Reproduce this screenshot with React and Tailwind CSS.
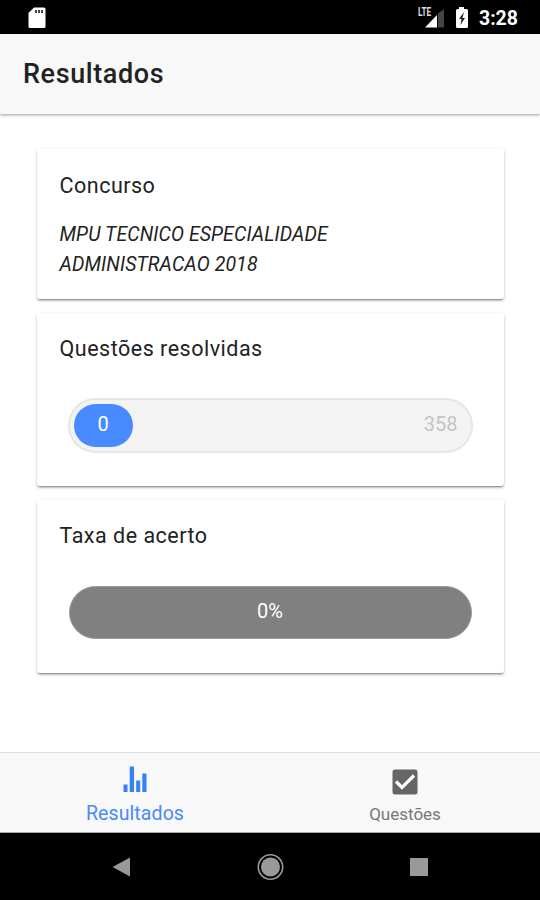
import React, { useState } from "react";

const StatusBar = () => (
  <div className="h-[34px] shrink-0 bg-black flex items-center justify-between pl-[27px] pr-[22px]">
    <svg className="mt-[2px]" width="19" height="22" viewBox="0 0 19 22">
      <path d="M7 0.500h10a1.500 1.500 0 0 1 1.500 1.500v17.500a1.500 1.500 0 0 1-1.500 1.500H3a1.500 1.500 0 0 1-1.500-1.500V6z" fill="#fff" />
      <path d="M8 3h2v3H8zM11 3h2v3h-2zM14 3h2v3h-2z" fill="#444" />
    </svg>
    <div className="flex items-center">
      <div className="relative w-7 h-6">
        <svg width="28" height="24" viewBox="0 0 28 24">
          <path d="M20 8.500l6-4.500v18.500h-6z" fill="#444" />
          <path d="M19 10v12.500H7z" fill="#fff" />
        </svg>
        <span className="absolute left-0 top-[1px] text-[12px] leading-[12px] font-bold text-[#ddd] origin-left scale-x-[0.68]">
          LTE
        </span>
      </div>
      <svg className="ml-[9px] mt-[2px]" width="14" height="22" viewBox="0 0 14 22">
        <path d="M4 0h5v2h2.500a1.500 1.500 0 0 1 1.500 1.500v16a1.500 1.500 0 0 1-1.500 1.500h-9A1.500 1.500 0 0 1 1 19.500v-16A1.500 1.500 0 0 1 2.500 2H4z" fill="#fff" />
        <path d="M9 5l-5 7h2.500l-1 6L10 11H7.500z" fill="#222" />
      </svg>
      <span className="ml-[10px] mt-[3px] text-[19.500px] leading-6 font-bold text-white">3:28</span>
    </div>
  </div>
);

const Card = ({ title, className, children }) => (
  <section
    className={`w-[467px] rounded-[3px] bg-white px-[23px] shadow-[0_2px_2px_0_rgba(0,0,0,0.2),0_3px_1px_-2px_rgba(0,0,0,0.22),0_1px_4px_0_rgba(0,0,0,0.12)] ${className}`}
  >
    <h2 className="text-[21.500px] leading-7 tracking-[0.5px] text-[#222]">{title}</h2>
    {children}
  </section>
);

const StatsIcon = () => (
  <svg width="24" height="26" viewBox="0 0 24 26" fill="#3880f8">
    <path d="M0.500 18.500h4V26h-4zM6.700 0.500h4.300v25.500H6.700zM13.200 14.500h4V26h-4zM19.300 7.500h4.200V26h-4.200z" />
  </svg>
);

const CheckIcon = () => (
  <svg width="26" height="26" viewBox="0 0 26 26">
    <rect x="0.500" y="0.500" width="25" height="25" rx="2.500" fill="#666" />
    <path d="M4 12.500l6 6L22 6.500" fill="none" stroke="#fff" strokeWidth="3.200" />
  </svg>
);

const NavigationBar = () => (
  <div className="h-[67px] shrink-0 bg-black flex items-center justify-between px-[112px]">
    <svg width="19" height="20" viewBox="0 0 19 20">
      <path d="M0.500 10L18 0.500v19z" fill="#999" />
    </svg>
    <svg width="28" height="28" viewBox="0 0 28 28">
      <circle cx="13.500" cy="14" r="12.200" fill="none" stroke="#999" strokeWidth="1.600" />
      <circle cx="13.500" cy="14" r="9.500" fill="#999" />
    </svg>
    <div className="w-[18px] h-[18px] bg-[#999]" />
  </div>
);

const App = () => {
  const [activeTab, setActiveTab] = useState("resultados");

  return (
    <div className="w-[540px] h-[900px] flex flex-col overflow-hidden bg-white font-['Roboto',sans-serif]">
      <StatusBar />
      <header className="relative h-20 shrink-0 bg-[#f8f8f8] flex items-center pl-[23px] shadow-[0_1px_3px_rgba(0,0,0,0.4)]">
        <h1 className="text-[27px] leading-8 font-medium tracking-[0.6px] text-[#222]">Resultados</h1>
      </header>

      <main className="flex-1 flex flex-col items-center pt-[35px] gap-[14px]">
        <Card title="Concurso" className="h-[150px] pt-[23px]">
          <p className="mt-5 w-[300px] text-[19.500px] leading-[29.500px] tracking-[0.1px] italic text-[#222]">
            MPU TECNICO ESPECIALIDADE ADMINISTRACAO 2018
          </p>
        </Card>

        <Card title="Questões resolvidas" className="h-[173px] pt-[22px]">
          <div className="mt-[35px] ml-2 w-[405px] h-[55px] rounded-full bg-[#f3f3f3] border-2 border-[#e6e6e6] flex items-center justify-between pl-1 pr-[13px] text-[20px] leading-6">
            <div className="w-[59px] h-[43px] rounded-[22px] bg-[#488aff] text-white flex items-center justify-center pb-[3px]">
              0
            </div>
            <span className="pb-[3px] text-[#c4c4c4]">358</span>
          </div>
        </Card>

        <Card title="Taxa de acerto" className="h-[173px] pt-[22px]">
          <div className="mt-9 ml-[9px] w-[403px] h-[53px] rounded-full bg-[#808080] border border-[#999] text-white flex items-center justify-center pb-[3px] text-[20px] leading-6">
            0%
          </div>
        </Card>
      </main>

      <nav className="h-[81px] shrink-0 bg-[#f8f8f8] border-t border-[#dedede] border-b border-b-[#aaa] flex">
        <button
          className="flex-1 flex flex-col items-center pt-[13px] text-[#488aff]"
          onClick={() => setActiveTab("resultados")}
          aria-selected={activeTab === "resultados"}
        >
          <StatsIcon />
          <span className="mt-[10px] text-[19.500px] leading-6 tracking-[0.1px]">Resultados</span>
        </button>
        <button
          className="flex-1 flex flex-col items-center pt-4 text-[#777]"
          onClick={() => setActiveTab("questoes")}
          aria-selected={activeTab === "questoes"}
        >
          <CheckIcon />
          <span className="mt-[7px] text-[17px] leading-6">Questões</span>
        </button>
      </nav>
      <NavigationBar />
    </div>
  );
};

export default App;
